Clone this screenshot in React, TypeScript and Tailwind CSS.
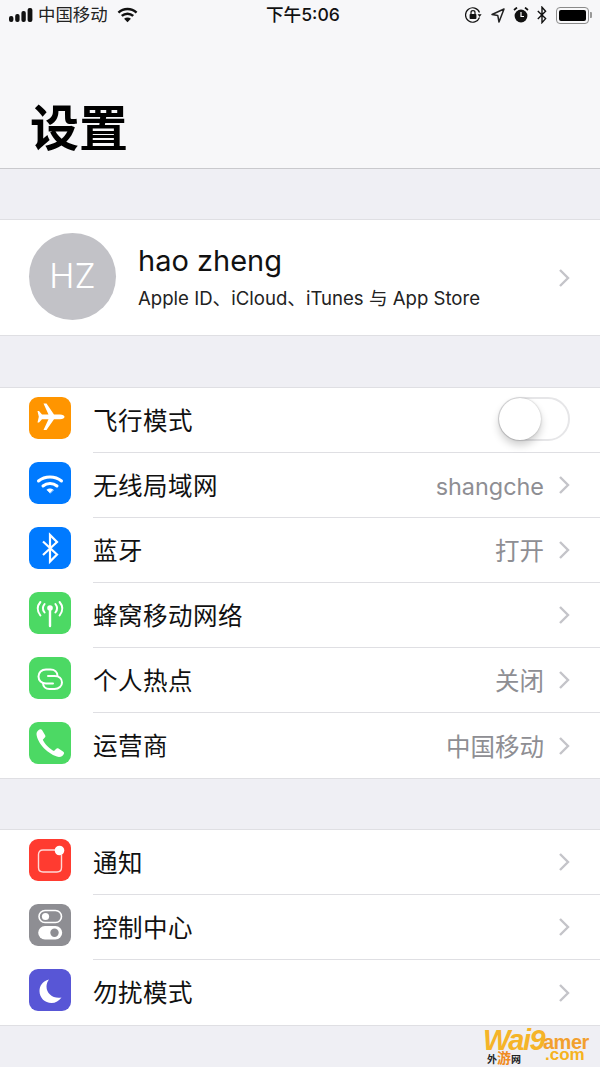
import type { ReactNode } from 'react';

const FONT = "font-['Inter','Noto_Sans_CJK_SC',sans-serif]";

function Chevron() {
  return (
    <svg width="12" height="20" viewBox="0 0 12 20" className="shrink-0" fill="none">
      <path d="M2 2 L10 10 L2 18" stroke="#c4c4c9" strokeWidth="2.4" />
    </svg>
  );
}

function IconBox({ bg, children }: { bg: string; children: ReactNode }) {
  return (
    <div className={`mb-[5px] flex h-[42px] w-[42px] shrink-0 items-center justify-center rounded-[9px] ${bg}`}>
      <svg width="42" height="42" viewBox="0 0 42 42" fill="none">
        {children}
      </svg>
    </div>
  );
}

const planeIcon = (
  <path
    d="M8.5 14 L10 14 L13 17.4 L19.5 17.4 L14.5 6.5 L17.5 6.5 L25 17.4 L31 17.4 C33.8 17.4 35.5 18.6 35.5 19.8 C35.5 21 33.8 22.2 31 22.2 L25 22.2 L17.5 33 L14.5 33 L19.5 22.2 L13 22.2 L10 25.6 L8.5 25.6 L9.8 19.8 Z"
    fill="#fff"
  />
);

const wifiIcon = (
  <g stroke="#fff" strokeWidth="3" strokeLinecap="round">
    <path d="M9.5 19 C16 13.5 26 13.5 32.5 19" />
    <path d="M14 24 C18 20.6 24 20.6 28 24" />
    <path d="M21 31 L17.8 27.8 C19.6 26.5 22.4 26.5 24.2 27.8 Z" fill="#fff" strokeWidth="0.6" strokeLinejoin="round" />
  </g>
);

const btIcon = (
  <path d="M14 14.5 L28 27.5 L21 34.5 L21 8 L28 15 L14 28" stroke="#fff" strokeWidth="2.2" strokeLinejoin="miter" />
);

const cellIcon = (
  <g stroke="#fff" strokeWidth="2" strokeLinecap="round">
    <circle cx="21" cy="16" r="2.8" fill="#fff" stroke="none" />
    <path d="M21 16 L21 34" strokeWidth="2.4" />
    <path d="M15.6 12 C13.6 14.5 13.6 18 15.6 20.5" />
    <path d="M26.4 12 C28.4 14.5 28.4 18 26.4 20.5" />
    <path d="M11.4 10 C8 14 8 19 11.4 23.5" />
    <path d="M30.6 10 C34 14 34 19 30.6 23.5" />
  </g>
);

const hotspotIcon = (
  <g stroke="#fff" strokeWidth="2" fill="none" strokeLinecap="round">
    <path d="M24 26.5 L17 26.5 C12.5 26.5 9.5 23.5 9.5 19.5 C9.5 15.5 12.5 12.5 17 12.5 L21.5 12.5 C25.5 12.5 28.5 15 28.5 19" />
    <path d="M19 19 L25.5 19 C30 19 33 21.5 33 25.5 C33 29 30 32 25.5 32 L20.5 32 C16.5 32 14 29.5 14 26" />
  </g>
);

const phoneIcon = (
  <path
    d="M10.5 7.5 C9 8.2 7.5 10 7.5 12 C8 21 19.5 33 30 35 C32.5 35 34.5 33.2 35 31.5 C35.3 30.5 34.8 30 34 29.4 L29.5 26.6 C28.6 26 27.8 26.2 27 27 L25 29 C21 27.4 15.5 22 13.8 17.8 L15.8 15.6 C16.6 14.8 16.6 14 16 13 L13 8 C12.4 7.2 11.5 7 10.5 7.5 Z"
    fill="#fff"
  />
);

const notifyIcon = (
  <>
    <path d="M26 11 L14 11 C11 11 9.5 12.5 9.5 15.5 L9.5 28.5 C9.5 31.5 11 33 14 33 L28 33 C31 33 32.5 31.5 32.5 28.5 L32.5 16" stroke="#ffd9d6" strokeWidth="1.4" />
    <circle cx="30.5" cy="11.5" r="4.8" fill="#fff" />
  </>
);

const controlIcon = (
  <>
    <rect x="10" y="6.5" width="22.5" height="12" rx="6" stroke="#fff" strokeWidth="1.6" />
    <circle cx="16.5" cy="12.5" r="3.6" fill="#fff" />
    <rect x="9.2" y="22" width="24" height="13.5" rx="6.75" fill="#fff" />
    <circle cx="25.5" cy="28.7" r="4.2" fill="#8e8e93" />
  </>
);

const moonIcon = (
  <path d="M20 10.5 C13.5 12 10.5 17 10.5 22 C10.5 29 16 34 22.5 34 C26.5 34 30 32 32.5 28.5 C24.5 30 17.5 25 17.5 17.5 C17.5 15 18.5 12.5 20 10.5 Z" fill="#fff" />
);

function Toggle() {
  return (
    <div className="relative mb-[2px] h-[44px] w-[72px] shrink-0 rounded-full border-2 border-[#e6e6e8] bg-white">
      <div className="absolute left-[-1px] top-[-1px] h-[42px] w-[42px] rounded-full bg-white shadow-[0_5px_9px_rgba(0,0,0,0.2),0_0_2px_rgba(0,0,0,0.25)]" />
    </div>
  );
}

type RowProps = {
  icon: ReactNode;
  bg: string;
  label: string;
  value?: string;
  valueClass?: string;
  last?: boolean;
  right?: ReactNode;
};

function Row({ icon, bg, label, value, valueClass = 'text-[24.5px]', last, right }: RowProps) {
  return (
    <div className="flex h-[65px] items-center pl-[29px]">
      <IconBox bg={bg}>{icon}</IconBox>
      <div className={`ml-[22px] flex h-full min-w-0 flex-1 items-center pr-[30px] ${last ? '' : 'border-b border-[#dfdfe3]'}`}>
        <span className="mt-[2px] flex-1 text-[24.5px] tracking-[0.5px] text-[#111]">{label}</span>
        {value && <span className={`mr-[14px] mt-[3px] text-[#8e8e93] ${valueClass}`}>{value}</span>}
        {right ?? <Chevron />}
      </div>
    </div>
  );
}

function Status() {
  return (
    <div className="relative flex h-[30px] items-center pl-[9px] pr-[8px] text-black">
      <svg width="24" height="14" viewBox="0 0 24 14" fill="#111">
        <rect x="0" y="8" width="4.4" height="6" rx="2" />
        <rect x="6.2" y="6" width="4.4" height="8" rx="2" />
        <rect x="12.4" y="3" width="4.4" height="11" rx="2" />
        <rect x="18.6" y="0" width="4.8" height="14" rx="2" />
      </svg>
      <span className="ml-[5px] text-[17.4px] leading-none text-[#222]">中国移动</span>
      <svg width="21" height="16" viewBox="0 0 22 16" fill="none" className="ml-[9px]">
        <path d="M1.5 5.5 C7 0.5 15 0.5 20.5 5.5" stroke="#111" strokeWidth="2.6" />
        <path d="M5 9 C8.5 5.8 13.5 5.8 17 9" stroke="#111" strokeWidth="2.6" />
        <path d="M11 15.5 L7.4 11.8 C9.5 10.2 12.5 10.2 14.6 11.8 Z" fill="#111" />
      </svg>
      <span className="absolute left-[266px] top-[5px] text-[17.6px] font-medium leading-[20px] text-[#111]">下午5:06</span>
      <div className="ml-auto flex items-center">
        <svg width="18" height="18" viewBox="0 0 18 18" fill="none">
          <path d="M15.5 11.5 A7.2 7.2 0 1 1 15.5 6.5" stroke="#111" strokeWidth="1.2" />
          <path d="M17.6 8.2 L13.6 8.2 L15.6 11 Z" fill="#111" />
          <rect x="5.6" y="8" width="6.8" height="5" rx="0.8" fill="#111" />
          <path d="M7 8 L7 6.4 C7 4 11 4 11 6.4 L11 8" stroke="#111" strokeWidth="1.2" />
        </svg>
        <svg width="14" height="15" viewBox="0 0 14 15" fill="none" className="ml-[9px]">
          <path d="M13 1 L1 6.5 L6.8 7.6 L8 14 Z" stroke="#222" strokeWidth="1.5" strokeLinejoin="round" />
        </svg>
        <svg width="16" height="16" viewBox="0 0 16 16" className="ml-[8px]">
          <circle cx="8" cy="9" r="6.4" fill="#111" />
          <path d="M8 5 L8 9.5 L11 9.5" stroke="#fff" strokeWidth="1.2" fill="none" />
          <path d="M1 3 L4 0.6 M15 3 L12 0.6" stroke="#111" strokeWidth="1.8" />
        </svg>
        <svg width="10" height="18" viewBox="0 0 10 18" fill="none" className="ml-[8px]">
          <path d="M0.8 5 L8.6 12.6 L5 16.6 L5 1.2 L8.6 5.2 L0.8 13" stroke="#111" strokeWidth="1.4" />
        </svg>
        <div className="ml-[9px] flex items-center">
          <div className="flex h-[17px] w-[33px] items-center rounded-[4px] border border-[#8a8a8a] p-[2px]">
            <div className="h-full w-full rounded-[2px] bg-black" />
          </div>
          <div className="ml-[1px] h-[6px] w-[2px] rounded-r-[1px] bg-[#999]" />
        </div>
      </div>
    </div>
  );
}

function Watermark() {
  return (
    <div className="pointer-events-none absolute bottom-0 right-0 h-[44px] w-[120px] overflow-hidden font-['Liberation_Sans',sans-serif]">
      <span className="absolute left-[3px] top-[2px] text-[29px] font-bold italic leading-[30px] tracking-[-1.5px] text-[#f5b428]">
        Wai9
      </span>
      <span className="absolute left-[63px] top-[9px] text-[20px] font-bold leading-[20px] tracking-[-0.5px] text-[#f2a02e]">amer</span>
      <span className="absolute left-[65px] top-[23px] text-[17px] font-bold leading-[18px] text-[#f6b320]">.com</span>
      <span className="absolute left-[7px] top-[27px] font-['Noto_Sans_CJK_SC',sans-serif] text-[10px] font-bold leading-[14px] text-[#222]">
        外<span className="text-[14px] text-[#f08a20]">游</span>网
      </span>
    </div>
  );
}

export default function App() {
  return (
    <div className={`relative h-[1067px] w-[600px] overflow-hidden bg-[#efeff4] ${FONT}`}>
      <header className="h-[169px] border-b border-[#c9c9cd] bg-[#f7f7f9]">
        <Status />
        <h1 className="ml-[30px] mt-[67px] text-[49px] font-semibold leading-[64px] text-black">设置</h1>
      </header>

      <section className="mt-[50px] flex h-[117px] items-center border-y border-[#dfdfe3] bg-white pl-[29px] pr-[30px]">
        <div className="mb-[2px] flex h-[87px] w-[87px] shrink-0 items-center justify-center rounded-full bg-[#c2c2c7] pb-[3px] text-[34px] font-light text-white">
          HZ
        </div>
        <div className="ml-[22px] flex-1">
          <div className="-mt-[3px] text-[29px] leading-[36px] text-[#111]">hao zheng</div>
          <div className="mt-[7px] text-[18.6px] leading-[24px] text-[#222]">Apple ID、iCloud、iTunes 与 App Store</div>
        </div>
        <Chevron />
      </section>

      <section className="mt-[51px] border-y border-[#dfdfe3] bg-white">
        <Row icon={planeIcon} bg="bg-[#ff9500]" label="飞行模式" right={<Toggle />} />
        <Row icon={wifiIcon} bg="bg-[#007aff]" label="无线局域网" value="shangche" valueClass="text-[23.4px]" />
        <Row icon={btIcon} bg="bg-[#007aff]" label="蓝牙" value="打开" />
        <Row icon={cellIcon} bg="bg-[#4cd964]" label="蜂窝移动网络" />
        <Row icon={hotspotIcon} bg="bg-[#4cd964]" label="个人热点" value="关闭" />
        <Row icon={phoneIcon} bg="bg-[#4cd964]" label="运营商" value="中国移动" last />
      </section>

      <section className="mt-[50px] border-y border-[#dfdfe3] bg-white">
        <Row icon={notifyIcon} bg="bg-[#ff3b30]" label="通知" />
        <Row icon={controlIcon} bg="bg-[#8e8e93]" label="控制中心" />
        <Row icon={moonIcon} bg="bg-[#5856d6]" label="勿扰模式" last />
      </section>

      <Watermark />
    </div>
  );
}
